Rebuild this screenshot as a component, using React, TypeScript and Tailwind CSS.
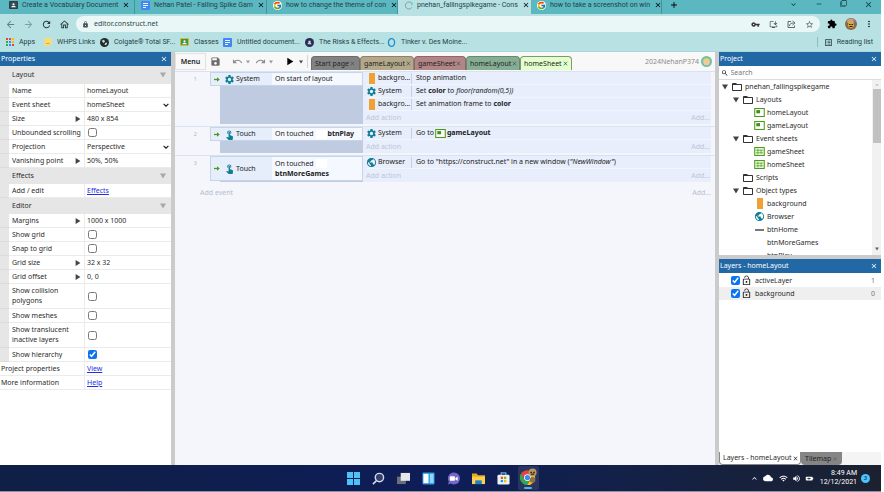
import React from 'react';
import {
  MdArrowBack, MdArrowForward, MdRefresh, MdOutlineHome, MdLock, MdVpnKey, MdExtension, MdMoreVert,
  MdStarBorder, MdSave, MdUndo, MdRedo, MdPlayArrow, MdSettings, MdPublic, MdFolderOpen,
  MdLockOpen, MdSearch, MdClose, MdAdd, MdExpandMore, MdExpandLess, MdOutlineInstallDesktop,
  MdCloud, MdWifi, MdVolumeUp, MdOutlineListAlt, MdTouchApp, MdBatteryChargingFull, MdRemove, MdFilterNone,
} from 'react-icons/md';
import { FcGoogle } from 'react-icons/fc';

/* ---------- small drawings ---------- */

const DocIcon = () => (
  <svg viewBox="0 0 18 18" className="size-[9px] shrink-0">
    <rect width="18" height="18" rx="2" fill="#4285f4" />
    <path d="M4 5h10M4 9h10M4 13h6" stroke="#fff" strokeWidth="1.8" />
  </svg>
);

const ClassroomIcon = ({ frame, board }: { frame: string; board: string }) => (
  <svg viewBox="0 0 18 16" className="h-[8px] w-[9px] shrink-0">
    <rect width="18" height="16" rx="1.5" fill={frame} />
    <rect x="2" y="2" width="14" height="12" fill={board} />
    <circle cx="9" cy="6.5" r="2.2" fill="#fff" />
    <path d="M4.5 12.5c0-4 9-4 9 0z" fill="#fff" />
  </svg>
);

const AppsGrid = () => (
  <svg viewBox="0 0 16 16" className="size-[8px] shrink-0">
    {['#ea4335', '#ea4335', '#fbbc04', '#34a853', '#4285f4', '#fbbc04', '#34a853', '#4285f4', '#ea4335'].map((c, i) => (
      <rect key={i} x={(i % 3) * 6} y={Math.floor(i / 3) * 6} width="4" height="4" fill={c} />
    ))}
  </svg>
);

const ShareIcon = () => (
  <svg viewBox="0 0 18 18" className="size-[9px]" fill="none" stroke="currentColor" strokeWidth="1.8">
    <path d="M8 3H2v12h13v-4" />
    <path d="M5 12c0-4 3-6 8-6" />
    <path d="M11 2l5 4-5 4" />
  </svg>
);

const LayoutIcon = () => (
  <svg viewBox="0 0 20 17" className="h-[9px] w-[11px] shrink-0">
    <rect x="1" y="1" width="18" height="15" fill="#fff" stroke="#4c9c1c" strokeWidth="2" />
    <rect x="4" y="4" width="7" height="6" fill="#3f8f14" />
  </svg>
);

const SheetIcon = () => (
  <svg viewBox="0 0 20 17" className="h-[9px] w-[11px] shrink-0">
    <rect x="1" y="1" width="18" height="15" fill="#f2fbe9" stroke="#4c9c1c" strokeWidth="2" />
    <path d="M3 6h14M3 11h14M7 3v11M13 5v8" stroke="#5aa82c" strokeWidth="1.6" />
  </svg>
);

const SpriteIcon = () => <span className="h-[11px] w-[6px] shrink-0 bg-[#eea236]" />;

const Triangle = ({ dir, color = '#444', small }: { dir: 'right' | 'down'; color?: string; small?: boolean }) => (
  <svg viewBox="0 0 10 10" className={`shrink-0 ${small ? 'size-[4px]' : 'size-[6px]'}`}>
    <path d={dir === 'right' ? 'M1 0v10l8-5z' : 'M0 1h10l-5 8z'} fill={color} />
  </svg>
);

const GreenArrow = () => (
  <svg viewBox="0 0 12 10" className="h-[5px] w-[6px] shrink-0">
    <path d="M0 5h7" stroke="#4a9b1d" strokeWidth="2.6" />
    <path d="M6 0.5l5.5 4.5L6 9.5z" fill="#4a9b1d" />
  </svg>
);

/* ---------- browser chrome ---------- */

type BrowserTab = { title: string; icon: React.ReactNode; width: string; active?: boolean };

const browserTabs: BrowserTab[] = [
  { title: 'Create a Vocabulary Document', icon: <ClassroomIcon frame="#26434a" board="#3a4a50" />, width: 'w-[135px] pl-[9px]' },
  { title: 'Nehan Patel - Falling Spike Gam', icon: <DocIcon />, width: 'w-[132px] pl-[6px]' },
  { title: 'how to change the theme of con', icon: <FcGoogle className="size-[9px] shrink-0 rounded-full bg-white" />, width: 'w-[131px] pl-[6px]' },
  {
    title: 'pnehan_fallingspikegame - Cons',
    icon: (
      <svg viewBox="0 0 18 18" className="size-[9px] shrink-0">
        <path d="M15.5 5A7 7 0 1 0 15.5 13" fill="none" stroke="#8d99a0" strokeWidth="2" />
        <path d="M12 2l5 3-2 4" fill="none" stroke="#46cfc0" strokeWidth="2" />
      </svg>
    ),
    width: 'w-[133px] pl-[6px]',
    active: true,
  },
  { title: 'how to take a screenshot on win', icon: <FcGoogle className="size-[9px] shrink-0 rounded-full bg-white" />, width: 'w-[131px] pl-[6px]' },
];

const TabStrip = () => (
  <div className="flex h-[14px] items-stretch bg-[#5bb7c0] font-[Roboto,sans-serif] text-[#1d4349]">
    {browserTabs.map((t) => (
      <div
        key={t.title}
        className={`flex items-center gap-[4px] pr-[5px] pb-[4px] ${t.width} ${t.active ? 'bg-[#b8e1e4]' : 'border-r border-[#4393a0]'}`}
      >
        {t.icon}
        <span className="flex-1 whitespace-nowrap">{t.title}</span>
        <button aria-label={`Close ${t.title}`} className="shrink-0 text-black"><MdClose className="size-[8px]" /></button>
      </div>
    ))}
    <button aria-label="New tab" className="ml-[7px] pb-[4px] text-black"><MdAdd className="size-[10px]" /></button>
    <div className="ml-auto flex items-start gap-[17px] pr-[8px] text-[#12343a]">
      <button aria-label="Search tabs"><MdExpandMore className="size-[9px]" /></button>
      <button aria-label="Minimize"><MdRemove className="size-[8px]" /></button>
      <button aria-label="Restore"><MdFilterNone className="size-[7px]" /></button>
      <button aria-label="Close window"><MdClose className="size-[9px]" /></button>
    </div>
  </div>
);

const AddressRow = () => (
  <div className="flex h-[20px] items-center bg-[#b8e1e4] pl-[5px] text-[#30474b]">
    <div className="flex gap-[7px]">
      <button aria-label="Back" className="text-[#5d8085]"><MdArrowBack className="size-[11px]" /></button>
      <button aria-label="Forward" className="text-[#7ba0a4]"><MdArrowForward className="size-[11px]" /></button>
      <button aria-label="Reload" className="text-[#26383b]"><MdRefresh className="size-[11px]" /></button>
      <button aria-label="Home" className="text-[#26383b]"><MdOutlineHome className="size-[11px]" /></button>
    </div>
    <div className="ml-[6px] flex h-[16px] flex-1 items-center rounded-full bg-[#eaf7f7] px-[6px]">
      <MdLock className="size-[7px] text-[#454f52]" />
      <input aria-label="Address" defaultValue="editor.construct.net" className="ml-[5px] min-w-0 flex-1 bg-transparent text-[7px] outline-none" />
      <div className="flex gap-[9px] text-[#4a5c5f]">
        <button aria-label="Passwords" className="text-[#333]"><MdVpnKey className="size-[9px]" /></button>
        <button aria-label="Install"><MdOutlineInstallDesktop className="size-[9px]" /></button>
        <button aria-label="Share"><ShareIcon /></button>
        <button aria-label="Bookmark"><MdStarBorder className="size-[9px]" /></button>
      </div>
    </div>
    <div className="flex items-center gap-[7px] px-[7px] text-black">
      <button aria-label="Extensions"><MdExtension className="size-[10px]" /></button>
      <button aria-label="Profile" className="ml-[1px]">
        <svg viewBox="0 0 24 24" className="size-[12px]">
          <circle cx="12" cy="12" r="12" fill="#8a6a48" />
          <path d="M3 6q9-10 18 0l-3 4H6z" fill="#caa27c" />
          <path d="M16 2l6 6-4 2z" fill="#9b59c8" />
          <circle cx="12" cy="14" r="6" fill="#d8a93c" />
          <path d="M8 13h3M13 13h3M9 17h6" stroke="#2c1b10" strokeWidth="2" />
        </svg>
      </button>
      <button aria-label="Browser menu"><MdMoreVert className="size-[10px]" /></button>
    </div>
  </div>
);

const bookmarks = [
  { label: 'Apps', icon: <AppsGrid />, width: 'w-[38px]' },
  {
    label: 'WHPS Links', width: 'w-[56px]',
    icon: <svg viewBox="0 0 16 16" className="size-[8px] shrink-0"><path d="M1 0h14v11l-4 5H1z" fill="#fbdc74" /><path d="M4 11h7" stroke="#d7a83a" strokeWidth="2" /></svg>,
  },
  {
    label: 'Colgate® Total SF...', width: 'w-[80px]',
    icon: <svg viewBox="0 0 16 16" className="size-[9px] shrink-0"><circle cx="8" cy="8" r="8" fill="#262b2e" /><path d="M3 5l4-2 2 3-3 3zM9 9l4-1-2 5-3-1z" fill="#b8e1e4" /></svg>,
  },
  { label: 'Classes', icon: <ClassroomIcon frame="#e2b52c" board="#2f9a52" />, width: 'w-[43px]' },
  { label: 'Untitled document...', icon: <DocIcon />, width: 'w-[82px]' },
  {
    label: 'The Risks & Effects...', width: 'w-[82px]',
    icon: <svg viewBox="0 0 16 16" className="size-[9px] shrink-0"><circle cx="8" cy="8" r="8" fill="#2a2c54" /><path d="M4 11q4-7 8 0zM6 5h4v3H6z" fill="#c6d9e6" /></svg>,
  },
  {
    label: 'Tinker v. Des Moine...', width: 'w-[84px]',
    icon: <svg viewBox="0 0 16 16" className="size-[9px] shrink-0"><ellipse cx="8" cy="8" rx="5.5" ry="6.8" fill="none" stroke="#1e8fce" strokeWidth="2.4" /></svg>,
  },
];

const BookmarksBar = () => (
  <nav className="flex h-[18px] items-center border-b border-[#a9d8dc] bg-[#b8e1e4] pb-px pl-[6px] font-[Roboto,sans-serif] text-[#243f44]">
    {bookmarks.map((b) => (
      <a key={b.label} href="#" className={`flex shrink-0 items-center gap-[5px] whitespace-nowrap ${b.width}`}>
        {b.icon}
        {b.label}
      </a>
    ))}
    <button className="ml-auto flex items-center gap-[4px] border-l border-[#8fbcc0] pr-[8px] pl-[6px]">
      <MdOutlineListAlt className="size-[9px]" />
      Reading list
    </button>
  </nav>
);

/* ---------- shared panel header ---------- */

const PanelHeader = ({ title }: { title: string }) => (
  <div className="flex h-[14px] shrink-0 items-center justify-between bg-[#2268a5] pr-[3px] pl-px text-white">
    <h2>{title}</h2>
    <button aria-label={`Close ${title}`}><MdClose className="size-[8px]" /></button>
  </div>
);

/* ---------- properties ---------- */

type Prop = {
  label: string;
  kind: 'text' | 'select' | 'check' | 'link';
  value?: string;
  checked?: boolean;
  expandable?: boolean;
  tall?: boolean;
};

const sections: { title: string; height: string; props: Prop[] }[] = [
  {
    title: 'Layout',
    height: 'h-[18px]',
    props: [
      { label: 'Name', kind: 'text', value: 'homeLayout' },
      { label: 'Event sheet', kind: 'select', value: 'homeSheet' },
      { label: 'Size', kind: 'text', value: '480 x 854', expandable: true },
      { label: 'Unbounded scrolling', kind: 'check' },
      { label: 'Projection', kind: 'select', value: 'Perspective' },
      { label: 'Vanishing point', kind: 'text', value: '50%, 50%', expandable: true },
    ],
  },
  { title: 'Effects', height: 'h-[16px]', props: [{ label: 'Add / edit', kind: 'link', value: 'Effects' }] },
  {
    title: 'Editor',
    height: 'h-[16px]',
    props: [
      { label: 'Margins', kind: 'text', value: '1000 x 1000', expandable: true },
      { label: 'Show grid', kind: 'check' },
      { label: 'Snap to grid', kind: 'check' },
      { label: 'Grid size', kind: 'text', value: '32 x 32', expandable: true },
      { label: 'Grid offset', kind: 'text', value: '0, 0', expandable: true },
      { label: 'Show collision polygons', kind: 'check', tall: true },
      { label: 'Show meshes', kind: 'check' },
      { label: 'Show translucent inactive layers', kind: 'check', tall: true },
      { label: 'Show hierarchy', kind: 'check', checked: true },
    ],
  },
];

const PropValue = ({ p, id }: { p: Prop; id: string }) => {
  if (p.kind === 'check') return <input id={id} type="checkbox" defaultChecked={p.checked} className="ml-px size-[9px] accent-[#0b75ee]" />;
  if (p.kind === 'link') return <a id={id} href="#" className="text-[#2430e0] underline">{p.value}</a>;
  if (p.kind === 'select')
    return (
      <div className="relative flex flex-1 items-center">
        <select id={id} defaultValue={p.value} className="w-full appearance-none bg-transparent outline-none">
          <option>{p.value}</option>
        </select>
        <svg viewBox="0 0 10 6" className="pointer-events-none absolute right-[2px] h-[4px] w-[6px]">
          <path d="M1 1l4 4 4-4" fill="none" stroke="#222" strokeWidth="2" />
        </svg>
      </div>
    );
  return <input id={id} defaultValue={p.value} className="w-full min-w-0 bg-transparent outline-none" />;
};

const PropRow = ({ p, gutter = true }: { p: Prop; gutter?: boolean }) => {
  const id = p.label.toLowerCase().replace(/[^a-z]+/g, '-');
  const Label = p.kind === 'link' ? 'span' : 'label';
  return (
    <div className={`flex ${p.tall ? 'h-[25px]' : 'h-[14px]'}`}>
      {gutter && <div className="w-[9px] shrink-0 border-b border-[#dcdcdc] bg-[#e6e6e6]" />}
      <div className={`flex shrink-0 items-center justify-between border-r border-b border-[#ebebeb] pr-[3px] ${gutter ? 'w-[76px] pl-[3px]' : 'w-[85px] pl-px'}`}>
        <Label htmlFor={p.kind === 'link' ? undefined : id}>{p.label}</Label>
        {p.expandable && <Triangle dir="right" />}
      </div>
      <div className="flex min-w-0 flex-1 items-center border-b border-[#ebebeb] pl-[2px]">
        <PropValue p={p} id={id} />
      </div>
    </div>
  );
};

const PropertiesPanel = () => (
  <aside className="flex w-[171px] shrink-0 flex-col bg-white text-[#2b2b2b]">
    <PanelHeader title="Properties" />
    {sections.map((s) => (
      <section key={s.title}>
        <div className={`flex items-center justify-between bg-[#e6e6e6] pr-[5px] pl-[12px] ${s.height}`}>
          <h3>{s.title}</h3>
          <Triangle dir="down" color="#a8a8a8" />
        </div>
        {s.props.map((p) => <PropRow key={p.label} p={p} />)}
      </section>
    ))}
    <PropRow gutter={false} p={{ label: 'Project properties', kind: 'link', value: 'View' }} />
    <PropRow gutter={false} p={{ label: 'More information', kind: 'link', value: 'Help' }} />
  </aside>
);

/* ---------- event sheet ---------- */

const sheetTabs = [
  { title: 'Start page', style: 'bg-[#828282] border-[#6c6c6c] w-[49px]' },
  { title: 'gameLayout', style: 'bg-[#b3a98a] border-[#8b8268] w-[54px]' },
  { title: 'gameSheet', style: 'bg-[#b28587] border-[#8d6769] w-[52px]' },
  { title: 'homeLayout', style: 'bg-[#85ae95] border-[#658a74] w-[54px]' },
  { title: 'homeSheet', style: 'bg-[#e4ffce] border-[#7f9a72] w-[52px]' },
];

const EditorToolbar = () => (
  <div className="flex h-[19px] shrink-0 items-center bg-[#f8f8f8]">
    <button className="h-[17px] w-[31px] border border-[#e2e2e2] text-[7px] font-semibold text-[#222]">Menu</button>
    <button aria-label="Save" className="ml-[4px] text-[#6d6d6d]"><MdSave className="size-[11px]" /></button>
    <div className="ml-[11px] flex items-center gap-[3px] text-[#8d8d8d]">
      <button aria-label="Undo"><MdUndo className="size-[11px]" /></button>
      <button aria-label="Undo history"><Triangle small dir="down" color="#999" /></button>
      <button aria-label="Redo" className="ml-[2px]"><MdRedo className="size-[11px]" /></button>
      <button aria-label="Redo history"><Triangle small dir="down" color="#999" /></button>
    </div>
    <button aria-label="Preview" className="ml-[10px] text-black"><MdPlayArrow className="size-[13px]" /></button>
    <button aria-label="Preview options" className="ml-[3px]"><Triangle small dir="down" /></button>
    <div className="mr-[3px] ml-[4px] h-[13px] w-px bg-[#d4d4d4]" />
    <div className="flex self-end pb-px">
      {sheetTabs.map((t) => (
        <div key={t.title} className={`flex h-[14px] items-center justify-between rounded-t-[4px] border border-b-0 px-[3px] text-[#222] ${t.style}`}>
          <button className="whitespace-nowrap">{t.title}</button>
          <button aria-label={`Close ${t.title}`} className="text-[#555]"><MdClose className="size-[7px]" /></button>
        </div>
      ))}
    </div>
    <div className="ml-auto flex items-center gap-[2px] pr-[3px] text-[#8b8b8b]">
      2024NehanP374
      <svg viewBox="0 0 20 20" className="size-[11px]">
        <circle cx="10" cy="10" r="10" fill="#6fc0a4" />
        <circle cx="10" cy="11" r="6" fill="#f1c9a5" />
        <path d="M3 8q7-9 14 0z" fill="#e2d36c" />
      </svg>
    </div>
  </div>
);

const objectIcons = {
  System: <MdSettings className="size-[11px] shrink-0 text-[#0f7d93]" />,
  Browser: <MdPublic className="size-[11px] shrink-0 text-[#0f7d93]" />,
  Touch: <MdTouchApp className="size-[11px] shrink-0 text-[#0f7d93]" />,
  sprite: <span className="flex w-[11px] justify-center"><SpriteIcon /></span>,
};

type Action = { icon: keyof typeof objectIcons; object: string; text: React.ReactNode };
type EventBlock = { icon: keyof typeof objectIcons; object: string; condition: React.ReactNode; tall?: boolean; actions: Action[] };

const Blank = () => <span className="ml-[1px] inline-block h-[9px] w-[11px] bg-white align-middle" />;

const events: EventBlock[] = [
  {
    icon: 'System', object: 'System', condition: 'On start of layout',
    actions: [
      { icon: 'sprite', object: 'backgro...', text: 'Stop animation' },
      { icon: 'System', object: 'System', text: <>Set <b>color</b> to <i>floor(random(0,5))</i></> },
      { icon: 'sprite', object: 'backgro...', text: <>Set animation frame to <b>color</b></> },
    ],
  },
  {
    icon: 'Touch', object: 'Touch', condition: <>On touched <Blank /><b>btnPlay</b></>,
    actions: [{ icon: 'System', object: 'System', text: <span className="flex items-center gap-[1px]">Go to <LayoutIcon /> <b>gameLayout</b></span> }],
  },
  {
    icon: 'Touch', object: 'Touch', condition: <>On touched <Blank /><br /><b>btnMoreGames</b></>, tall: true,
    actions: [{ icon: 'Browser', object: 'Browser', text: <>Go to "https://construct.net" in a new window (<i>"NewWindow"</i>)</> }],
  },
];

const EventRow = ({ ev, index }: { ev: EventBlock; index: number }) => (
  <div className="mb-[2px] flex border-t border-[#d9e2f0]">
    <span className="w-[35px] shrink-0 pt-[2px] pr-[13px] text-right text-[6px] text-[#b3bcd0]">{index}</span>
    <div className="flex w-[153px] shrink-0 flex-col">
      <div className={`flex border border-[#c6d5e8] bg-[#e5eefa] ${ev.tall ? 'h-[25px]' : 'h-[14px]'}`}>
        <div className="flex w-[61px] shrink-0 items-center gap-[2px] pl-[3px]">
          <GreenArrow />
          <span className="ml-[2px] flex items-center gap-[1px]">{objectIcons[ev.icon]}{ev.object}</span>
        </div>
        <div className="flex flex-1 items-center bg-[#f5f8fe] pl-[3px] whitespace-nowrap">
          <span>{ev.condition}</span>
        </div>
      </div>
      <div className="ml-[10px] flex-1 bg-[#bfcbe0]" />
    </div>
    <div className="mr-[4px] min-w-0 flex-1 bg-[#e8eefb] pl-[3px]">
      {ev.actions.map((a, i) => (
        <div key={i} className="flex h-[13px] items-center border-b border-[#f1f5fd]">
          <div className="flex h-[11px] w-[46px] shrink-0 items-center gap-[1px] border-r border-[#c5d0e6]">{objectIcons[a.icon]}{a.object}</div>
          <div className="pl-[4px] whitespace-nowrap">{a.text}</div>
        </div>
      ))}
      <div className="flex h-[13px] items-center justify-between pr-px text-[#bcc6da]">
        <button>Add action</button>
        <button>Add...</button>
      </div>
    </div>
  </div>
);

const EventSheet = () => (
  <main className="flex min-w-0 flex-1 flex-col bg-[#f4f6fc] text-[#222]">
    <EditorToolbar />
    {events.map((ev, i) => <EventRow key={i} ev={ev} index={i + 1} />)}
    <div className="flex justify-between pt-[4px] pr-[4px] pl-[25px] text-[#b4bdd0]">
      <button>Add event</button>
      <button>Add...</button>
    </div>
  </main>
);

/* ---------- project + layers ---------- */

type Node = { label: string; depth: string; icon: React.ReactNode; open?: boolean; folder?: boolean };
const folder = <MdFolderOpen className="size-[12px] shrink-0 text-[#333]" />;

const tree: Node[] = [
  { label: 'pnehan_fallingspikegame', depth: 'pl-[3px]', icon: folder, open: true, folder: true },
  { label: 'Layouts', depth: 'pl-[14px]', icon: folder, open: true, folder: true },
  { label: 'homeLayout', depth: 'pl-[35px]', icon: <LayoutIcon /> },
  { label: 'gameLayout', depth: 'pl-[35px]', icon: <LayoutIcon /> },
  { label: 'Event sheets', depth: 'pl-[14px]', icon: folder, open: true, folder: true },
  { label: 'gameSheet', depth: 'pl-[35px]', icon: <SheetIcon /> },
  { label: 'homeSheet', depth: 'pl-[35px]', icon: <SheetIcon /> },
  { label: 'Scripts', depth: 'pl-[14px]', icon: folder, folder: true },
  { label: 'Object types', depth: 'pl-[14px]', icon: folder, open: true, folder: true },
  { label: 'background', depth: 'pl-[35px]', icon: <span className="flex w-[11px] justify-center"><SpriteIcon /></span> },
  { label: 'Browser', depth: 'pl-[35px]', icon: objectIcons.Browser },
  { label: 'btnHome', depth: 'pl-[35px]', icon: <span className="mx-[1px] h-[2px] w-[9px] bg-[#777]" /> },
  { label: 'btnMoreGames', depth: 'pl-[35px]', icon: <span className="w-[11px]" /> },
  { label: 'btnPlay', depth: 'pl-[35px]', icon: <span className="w-[11px]" /> },
];

const ProjectPanel = () => (
  <section className="flex h-[203px] shrink-0 flex-col bg-white">
    <PanelHeader title="Project" />
    <label className="flex h-[14px] shrink-0 items-center gap-[2px] border-b border-[#dcdcdc] pl-[2px]">
      <MdSearch className="size-[8px] text-black" />
      <input aria-label="Search project" placeholder="Search" className="w-full bg-transparent outline-none placeholder:text-[#777]" />
    </label>
    <div className="flex min-h-0 flex-1">
      <ul className="min-w-0 flex-1 overflow-hidden">
        {tree.map((n) => (
          <li key={n.label} className={`flex h-[13px] items-center whitespace-nowrap ${n.depth}`}>
            {n.folder && <span className="mr-[3px] flex w-[6px]">{n.open && <Triangle dir="down" />}</span>}
            {n.icon}
            <span className="ml-[2px]">{n.label}</span>
          </li>
        ))}
      </ul>
      <div className="flex w-[9px] shrink-0 flex-col items-center bg-[#f1f1f1] py-[2px]">
        <MdExpandLess className="size-[6px] text-[#888]" />
        <div className="mt-[1px] h-[54px] w-[8px] bg-[#c1c1c1]" />
        <span className="mt-auto pb-[2px]"><Triangle small dir="down" color="#666" /></span>
      </div>
    </div>
  </section>
);

const LayersPanel = () => (
  <section className="flex flex-1 flex-col bg-white">
    <PanelHeader title="Layers - homeLayout" />
    <ul className="flex-1 pt-[1px]">
      {[{ name: 'activeLayer', n: 1 }, { name: 'background', n: 0 }].map((l) => (
        <li key={l.name} className={`flex h-[13px] items-center pr-[6px] pl-[12px] ${l.n ? '' : 'bg-[#efefef]'}`}>
          <input id={l.name} type="checkbox" defaultChecked className="size-[9px] accent-[#0b75ee]" />
          <button aria-label={`Lock ${l.name}`} className="ml-px"><MdLockOpen className="size-[11px] text-[#222]" /></button>
          <label htmlFor={l.name} className="ml-[3px]">{l.name}</label>
          <span className="ml-auto text-[#777]">{l.n}</span>
        </li>
      ))}
    </ul>
    <div className="flex h-[13px] bg-[#f4f4f4]">
      <div className="flex w-[82px] items-center justify-between rounded-b-[4px] border border-t-0 border-[#888] bg-white pr-[2px] pl-[3px]">
        <button className="whitespace-nowrap">Layers - homeLayout</button>
        <button aria-label="Close Layers tab"><MdClose className="size-[7px]" /></button>
      </div>
      <div className="flex w-[41px] items-center justify-between rounded-b-[4px] bg-[#858585] px-[4px] text-[#222]">
        <button>Tilemap</button>
        <button aria-label="Close Tilemap tab"><MdClose className="size-[6px] text-[#555]" /></button>
      </div>
    </div>
  </section>
);

/* ---------- taskbar ---------- */

const taskIcons: { name: string; art: React.ReactNode }[] = [
  { name: 'Start', art: <path d="M0 0h13v13H0zM15 0h13v13H15zM0 15h13v13H0zM15 15h13v13H15z" fill="#4cc2f5" /> },
  { name: 'Search', art: <><circle cx="16" cy="12" r="9" fill="#33416e" stroke="#d4dae8" strokeWidth="3" /><path d="M9 19l-7 7" stroke="#d4dae8" strokeWidth="3.5" /></> },
  { name: 'Task view', art: <><rect x="0" y="10" width="19" height="16" fill="#6c6f7a" /><rect x="8" y="2" width="20" height="17" fill="#e4e6ea" /></> },
  { name: 'Widgets', art: <><rect x="1" y="1" width="26" height="26" rx="2" fill="#2a9be6" /><rect x="3" y="4" width="11" height="20" fill="#fff" /><rect x="17" y="4" width="8" height="20" fill="#8fd6f8" /></> },
  { name: 'Chat', art: <><path d="M14 1a13 13 0 1 1-6 24l-6 2 2-6A13 13 0 0 1 14 1z" fill="#7367c8" /><rect x="6" y="9" width="11" height="10" rx="2" fill="#fff" /><path d="M18 13l5-3v9l-5-3z" fill="#fff" /></> },
  { name: 'File Explorer', art: <><path d="M0 3h10l3 4h15v19H0z" fill="#e9a91f" /><path d="M0 10h28v16H0z" fill="#fccf4c" /><path d="M7 18h14v8H7z" fill="#1d7fce" /></> },
  { name: 'Microsoft Store', art: <><path d="M9 7V2h10v5" fill="none" stroke="#5cb8ee" strokeWidth="2.5" /><rect x="1" y="6" width="26" height="21" rx="3" fill="#eef1f5" /><path d="M8 10h5v5H8z" fill="#f25022" /><path d="M15 10h5v5h-5z" fill="#7fba00" /><path d="M8 17h5v5H8z" fill="#00a4ef" /><path d="M15 17h5v5h-5z" fill="#ffb900" /></> },
  {
    name: 'Chrome',
    art: <>
      <circle cx="13" cy="15" r="13" fill="#e2453a" />
      <path d="M1.700 8.500A13 13 0 0 0 13 28l5-10-11-1z" fill="#2da94f" />
      <path d="M13 28a13 13 0 0 0 12-19H14l5 9z" fill="#fcc31e" />
      <circle cx="13" cy="15" r="6" fill="#fff" /><circle cx="13" cy="15" r="4.600" fill="#4285f4" />
      <circle cx="22" cy="6" r="7" fill="#b89766" /><path d="M18 6h3M23 6h3M19 9h6" stroke="#3a2618" strokeWidth="2" />
      <circle cx="22" cy="19" r="5" fill="#8f7045" />
    </>,
  },
];

const Taskbar = () => (
  <footer className="grid h-[27px] shrink-0 grid-cols-[1fr_auto_1fr] items-center border-b border-[#8b93a6] bg-linear-to-r from-[#101f45] via-[#0e1d58] to-[#1b2130] text-white">
    <span />
    <div className="flex gap-[4px]">
      {taskIcons.map((t, i) => (
        <button key={t.name} aria-label={t.name} className={`flex h-[24px] w-[21px] flex-col items-center justify-center rounded-[2px] ${i === 7 ? 'bg-white/10' : ''}`}>
          <svg viewBox="0 0 28 28" className={i === 7 ? 'mt-[2px] size-[16px] overflow-visible' : 'size-[13px]'}>{t.art}</svg>
          {i === 7 && <span className="mt-[2px] h-[2px] w-[8px] rounded-full bg-[#4db4ea]" />}
        </button>
      ))}
    </div>
    <div className="flex items-center justify-end gap-[4px] pr-[11px] font-[Roboto,sans-serif]">
      <MdExpandLess className="size-[9px]" />
      <MdCloud className="size-[10px]" />
      <MdWifi className="ml-[2px] size-[9px]" />
      <MdVolumeUp className="size-[9px]" />
      <MdBatteryChargingFull className="size-[9px] rotate-90" />
      <div className="ml-[2px] text-right leading-[9px]">8:49 AM<br />12/12/2021</div>
      <span className="flex size-[9px] items-center justify-center rounded-full bg-[#4cc2ff] text-[6px] text-[#0b2740]">3</span>
    </div>
  </footer>
);

export default function App() {
  return (
    <div className="flex h-screen flex-col overflow-hidden bg-white pr-[3px] font-['Noto_Sans',sans-serif] text-[7px] leading-[10px]">
      <TabStrip />
      <AddressRow />
      <BookmarksBar />
      <div className="flex min-h-0 flex-1">
        <PropertiesPanel />
        <div className="w-[4px] shrink-0 bg-[#cbcbcb]" />
        <EventSheet />
        <div className="w-[4px] shrink-0 bg-[#cbcbcb]" />
        <aside className="flex w-[162px] shrink-0 flex-col text-[#2b2b2b]">
          <ProjectPanel />
          <div className="h-[4px] shrink-0 bg-[#cbcbcb]" />
          <LayersPanel />
        </aside>
      </div>
      <Taskbar />
    </div>
  );
}
